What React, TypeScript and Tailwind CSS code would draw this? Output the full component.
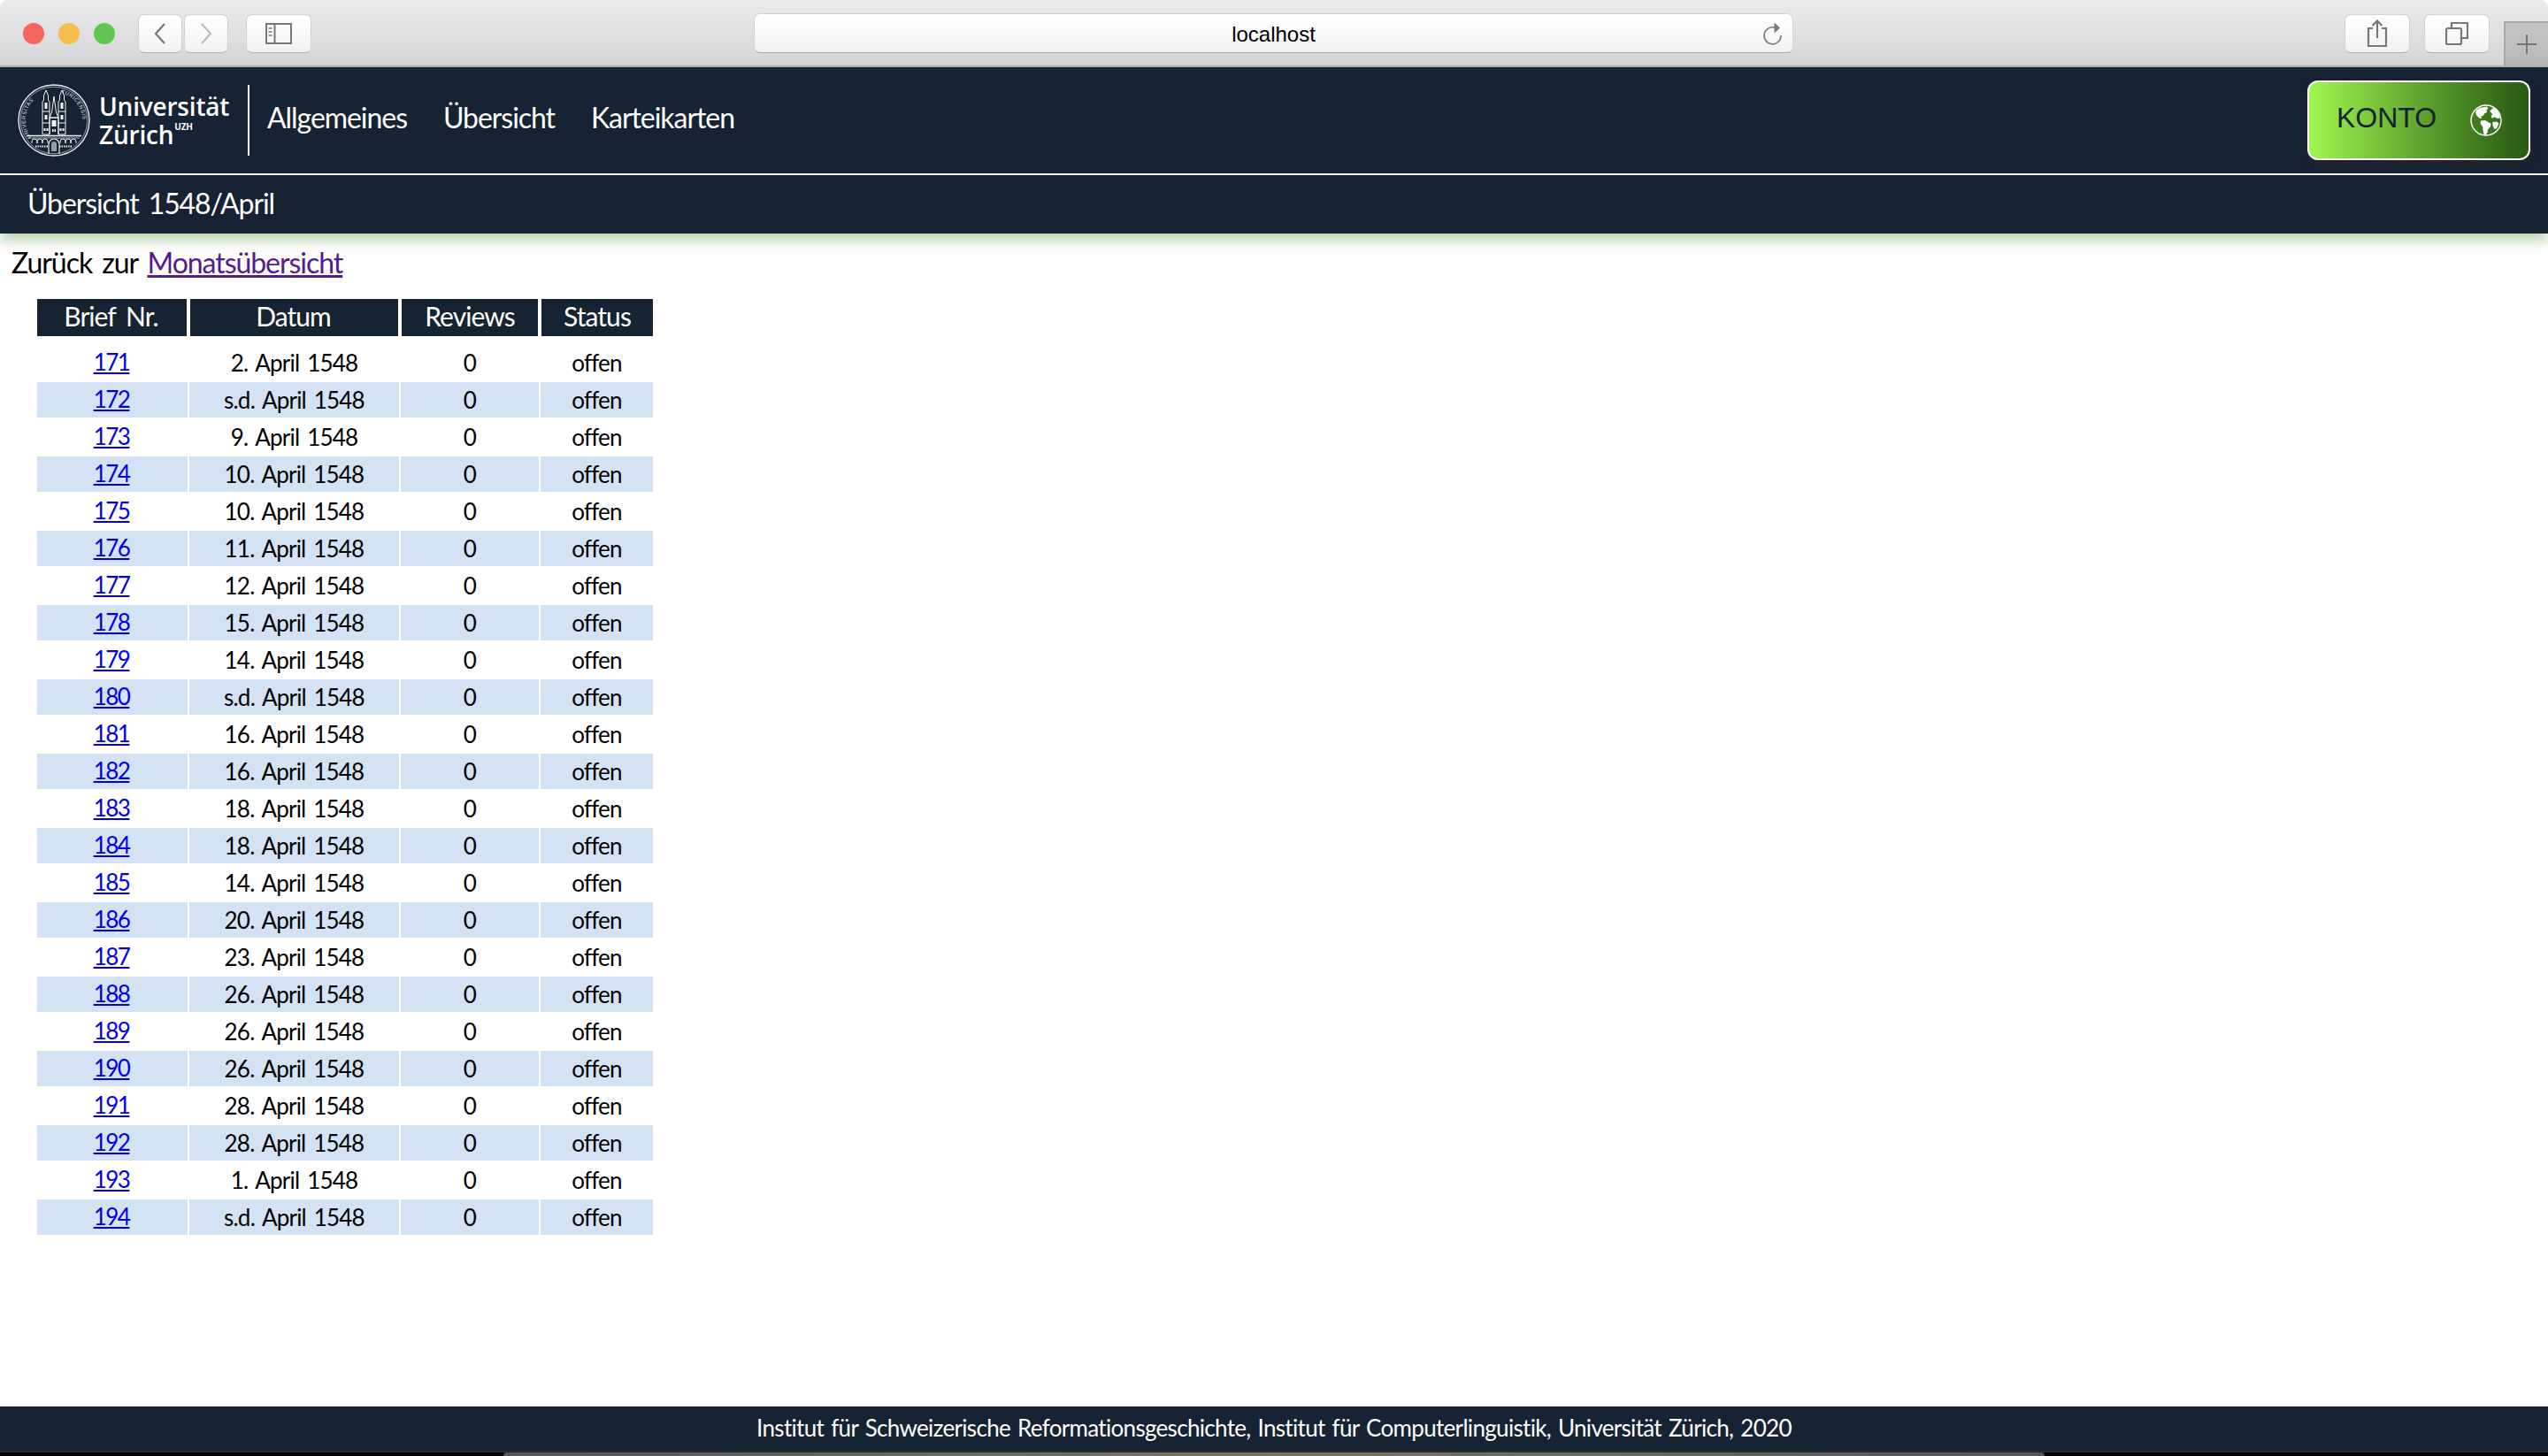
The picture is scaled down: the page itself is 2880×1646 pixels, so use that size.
import React from "react";

const rows: [number, string][] = [
  [171, "2. April 1548"], [172, "s.d. April 1548"], [173, "9. April 1548"], [174, "10. April 1548"],
  [175, "10. April 1548"], [176, "11. April 1548"], [177, "12. April 1548"], [178, "15. April 1548"],
  [179, "14. April 1548"], [180, "s.d. April 1548"], [181, "16. April 1548"], [182, "16. April 1548"],
  [183, "18. April 1548"], [184, "18. April 1548"], [185, "14. April 1548"], [186, "20. April 1548"],
  [187, "23. April 1548"], [188, "26. April 1548"], [189, "26. April 1548"], [190, "26. April 1548"],
  [191, "28. April 1548"], [192, "28. April 1548"], [193, "1. April 1548"], [194, "s.d. April 1548"],
];

function Logo() {
  return (
    <svg width="82" height="82" viewBox="0 0 82 82" className="shrink-0">
      <circle cx="41" cy="41" r="40" fill="none" stroke="#e8ebee" strokeWidth="1.4" />
      <circle cx="41" cy="41" r="37.8" fill="none" stroke="#e8ebee" strokeWidth="0.6" />
      <defs>
        <path id="arcL" d="M 15 60 A 32 32 0 0 1 33 10" />
        <path id="arcR" d="M 49 10 A 32 32 0 0 1 67 60" />
      </defs>
      <text fill="#dfe3e7" fontSize="6" fontFamily="Liberation Sans, sans-serif" letterSpacing="0.55">
        <textPath href="#arcL">UNIVERSITAS</textPath>
      </text>
      <text fill="#dfe3e7" fontSize="6" fontFamily="Liberation Sans, sans-serif" letterSpacing="0.55">
        <textPath href="#arcR">TURICENSIS</textPath>
      </text>
      <g fill="none" stroke="#f2f4f6" strokeWidth="1">
        <path d="M28 57V20l1.500-2v-5L32 7l2.500 6v5l1.500 2v37z" />
        <path d="M46 57V20l1.500-2v-5L50 7l2.500 6v5l1.500 2v37z" />
        <path d="M36 57V38h10v19" />
        <path d="M41 14l-2.500 18-2.500 6h10l-2.500-6z" />
        <path d="M28 31h8M46 31h8M28 44h8M46 44h8" />
      </g>
      <g fill="#f2f4f6">
        <rect x="30.500" y="21" width="3" height="7" />
        <rect x="48.500" y="21" width="3" height="7" />
        <rect x="30.500" y="35" width="3" height="5" />
        <rect x="48.500" y="35" width="3" height="5" />
        <rect x="38.500" y="41" width="5" height="7" />
        <rect x="29.500" y="50" width="2" height="3" />
        <rect x="32.500" y="50" width="2" height="3" />
        <rect x="39" y="51" width="1.500" height="3" />
        <rect x="41.500" y="51" width="1.500" height="3" />
        <rect x="47.500" y="50" width="2" height="3" />
        <rect x="50.500" y="50" width="2" height="3" />
      </g>
      <path d="M10 58.500H72" stroke="#f2f4f6" strokeWidth="1.500" />
      <path d="M12 61H70" stroke="#f2f4f6" strokeWidth="0.7" />
      <path
        d="M16 67v-2a3 3 0 0 1 6 0v2M22 67v-2a3 3 0 0 1 6 0v2M28 67v-2a3 3 0 0 1 6 0v2M48 67v-2a3 3 0 0 1 6 0v2M54 67v-2a3 3 0 0 1 6 0v2M60 67v-2a3 3 0 0 1 6 0v2"
        fill="none" stroke="#e8ebee" strokeWidth="1"
      />
      <path d="M35 79V68a6 6 0 0 1 12 0v11" fill="none" stroke="#e8ebee" strokeWidth="1.200" />
      <path d="M38 76v-8a3 3 0 0 1 6 0v8" fill="#e8ebee" fillOpacity="0.6" />
      <path d="M20 70.500H35M47 70.500H62" stroke="#e8ebee" strokeWidth="1.800" strokeDasharray="1.500 1" />
    </svg>
  );
}

function Globe() {
  return (
    <svg width="36" height="36" viewBox="0 0 36 36" className="shrink-0">
      <circle cx="18" cy="18" r="17" fill="none" stroke="#fff" strokeWidth="1.400" />
      <g fill="#fff">
        <path d="M7 6.500l4-2.500 8-1.500 1.500 2-2 2 .5 2.500-2.500 1-1.500 2.500-2.500 1 .5 2.500-3-.5-3-3.500-1-2.500z" />
        <path d="M12 18.500l5-.5 4 2.500 2.500 1-.5 3.500-3 3.500-.5 3.500-2 2.500-2-.5-1-5-.5-4-2.500-3.500z" />
        <path d="M22 7.500l4-3.500 4 2.500 3.500 6 .5 3-3 .5-3-1.500-3.500 1-1-2.500 2-1.500z" />
        <path d="M25.500 20l4.500-.5 2.500 2-2.500 5.500-2.500 1-2-4z" />
      </g>
    </svg>
  );
}

const btn =
  "flex items-center justify-center h-[44px] rounded-[7px] bg-gradient-to-b from-[#ffffff] to-[#f3f2f3] border border-[#d3d1d3] border-b-[#b5b3b5]";

function Toolbar() {
  return (
    <div className="h-[76px] shrink-0 flex bg-gradient-to-b from-[#ebeaec] to-[#d5d4d6] border-b-2 border-[#b0aeb0] rounded-t-[8px] relative">
      <div className="flex items-start pt-[16px] pl-[26px] flex-1">
        <div className="flex gap-[16px] mt-[10px]">
          <span className="w-[24px] h-[24px] rounded-full bg-[#f2675d]" />
          <span className="w-[24px] h-[24px] rounded-full bg-[#f6be4f]" />
          <span className="w-[24px] h-[24px] rounded-full bg-[#62c655]" />
        </div>
        <div className={btn + " w-[50px] ml-[26px]"}>
          <svg width="18" height="26" viewBox="0 0 18 26" fill="none" stroke="#777" strokeWidth="2.200"><path d="M14 2L4 13l10 11" /></svg>
        </div>
        <div className={btn + " w-[50px] ml-[2px]"}>
          <svg width="18" height="26" viewBox="0 0 18 26" fill="none" stroke="#bdbcbd" strokeWidth="2.200"><path d="M4 2l10 11L4 24" /></svg>
        </div>
        <div className={btn + " w-[74px] ml-[20px]"}>
          <svg width="30" height="24" viewBox="0 0 30 24" fill="none" stroke="#777" strokeWidth="2">
            <rect x="1" y="1" width="28" height="22" />
            <path d="M10.500 1v22" />
            <path d="M3.500 6h4M3.500 10h4M3.500 14h4" strokeWidth="1.600" />
          </svg>
        </div>
      </div>
      <div className="absolute left-[852px] top-[15px] w-[1175px] h-[45px] pt-[2px] rounded-[7px] bg-gradient-to-b from-[#ffffff] to-[#f3f2f3] border border-[#d3d1d3] border-b-[#a9a7a9] flex items-center justify-center font-['Liberation_Sans',sans-serif] text-[24px] text-black">
        localhost
        <svg className="absolute right-[10px] top-[8px]" width="24" height="28" viewBox="0 0 24 28" fill="none" stroke="#7a7a7a" strokeWidth="1.600">
          <path d="M15 7.500A9.500 9.500 0 1 0 21 16" />
          <path d="M13.500 1.500L20 7.500l-6.500 6z" fill="#7a7a7a" stroke="none" />
        </svg>
      </div>
      <div className="flex items-start pt-[16px]">
        <div className={btn + " w-[74px]"}>
          <svg width="24" height="32" viewBox="0 0 24 32" fill="none" stroke="#777" strokeWidth="2.200">
            <path d="M7 10H2v20h20V10h-5" />
            <path d="M12 21V2M6.500 7L12 1.500 17.500 7" />
          </svg>
        </div>
        <div className={btn + " w-[74px] ml-[16px]"}>
          <svg width="26" height="26" viewBox="0 0 26 26" fill="none" stroke="#777" strokeWidth="2.200">
            <rect x="1" y="7" width="17" height="18" rx="1.500" />
            <path d="M7 7V1h18v17h-7" />
          </svg>
        </div>
        <div className="w-[50px] h-[50px] mt-[8px] ml-[16px] bg-gradient-to-b from-[#c6c4c6] to-[#b9b7b9] border-l-2 border-t-2 border-[#a9a7a9] flex items-center justify-center">
          <svg width="24" height="24" viewBox="0 0 24 24" stroke="#777" strokeWidth="2"><path d="M12 1v22M1 12h22" /></svg>
        </div>
      </div>
    </div>
  );
}

export default function App() {
  return (
    <div className="w-[2880px] h-[1646px] flex flex-col overflow-hidden bg-white font-['Lato',sans-serif] text-black">
      <Toolbar />

      <header className="relative z-10 shrink-0 bg-[#162332] shadow-[0_8px_14px_rgba(95,150,75,0.42)]">
        <div className="h-[120px] flex items-center border-b-2 border-white box-content">
          <div className="ml-[20px] flex items-center h-[80px]">
            <Logo />
            <div className="ml-[10px] w-[168px] text-white font-['Open_Sans',sans-serif] font-semibold text-[28px] leading-[32px] tracking-[-0.2px]">
              <div>Universität</div>
              <div className="flex items-start">
                Zürich<span className="text-[10px] leading-[14px] font-bold ml-[1px]">UZH</span>
              </div>
            </div>
            <div className="w-[2px] h-[80px] bg-white" />
          </div>
          <nav className="flex gap-[41px] ml-[20px] pb-[6px] text-white text-[32px] leading-[40px] tracking-[-1.05px]">
            <a>Allgemeines</a>
            <a>Übersicht</a>
            <a>Karteikarten</a>
          </nav>
          <button className="ml-auto mr-[20px] w-[252px] h-[90px] rounded-[12px] border-2 border-white bg-gradient-to-r from-[#a0f84f] to-[#275913] flex items-center justify-between pl-[31px] pr-[30px] font-['Liberation_Sans',sans-serif] text-[32px] text-[#162332] shadow-[0_4px_8px_rgba(60,30,40,0.5)]">
            <span className="pb-[6px]">KONTO</span>
            <Globe />
          </button>
        </div>
        <div className="h-[66px] flex items-center pl-[31px] pb-[3px] text-white text-[32px] tracking-[-1.1px] [word-spacing:4px]">Übersicht 1548/April</div>
      </header>

      <main className="flex-1 min-h-0 pt-[15px]">
        <p className="pl-[13px] text-[32px] leading-[36px] tracking-[-1.05px] [word-spacing:4px]">
          Zurück zur <a className="underline text-[#551a8b]">Monatsübersicht</a>
        </p>
        <table className="ml-[42px] mt-[23px] border-separate border-spacing-0 table-fixed w-[696px]">
          <colgroup>
            <col className="w-[172px]" />
            <col className="w-[239px]" />
            <col className="w-[158px]" />
            <col className="w-[127px]" />
          </colgroup>
          <thead>
            <tr className="h-[42px] text-[30px] leading-[34px] font-normal text-white tracking-[-0.95px] [word-spacing:5px]">
              <th className="font-normal pb-[5px] pr-[2px] bg-[#162332] border-r-[3px] border-white">Brief Nr.</th>
              <th className="font-normal pb-[5px] pr-[2px] bg-[#162332] border-l border-r-[3px] border-white">Datum</th>
              <th className="font-normal pb-[5px] bg-[#162332] border-l border-r-[3px] border-white">Reviews</th>
              <th className="font-normal pb-[5px] bg-[#162332] border-l border-white">Status</th>
            </tr>
            <tr className="h-[10px]"><td colSpan={4} className="p-0" /></tr>
          </thead>
          <tbody className="text-[26px] leading-[30px] text-center tracking-[-0.8px] [word-spacing:3px]">
            {rows.map(([n, d], i) => {
              const bg = i % 2 === 1 ? "bg-[#d3e3f3]" : "bg-white";
              return (
                <tr key={n} className="h-[42px]">
                  <td className={bg + " border-r-2 border-b-2 border-white pb-[2px] pr-[2px]"}><a className="underline text-[#0000ee] tracking-[-1.5px]">{n}</a></td>
                  <td className={bg + " border-r-2 border-b-2 border-white"}>{d}</td>
                  <td className={bg + " border-r-2 border-b-2 border-white"}>0</td>
                  <td className={bg + " border-b-2 border-white"}>offen</td>
                </tr>
              );
            })}
          </tbody>
        </table>
      </main>

      <footer className="shrink-0 h-[50px] bg-[#162332] flex items-center justify-center pb-[2px] text-white text-[26px] tracking-[-0.68px] [word-spacing:2px]">
        Institut für Schweizerische Reformationsgeschichte, Institut für Computerlinguistik, Universität Zürich, 2020
      </footer>
      <div className="shrink-0 h-[2px] bg-[#2c2c2c]" />
      <div className="shrink-0 h-[4px] bg-black flex justify-center">
        <div className="w-[1742px] h-[4px] rounded-t-[4px] bg-gradient-to-r from-[#555555] via-[#77775f] to-[#555555]" />
      </div>
    </div>
  );
}
